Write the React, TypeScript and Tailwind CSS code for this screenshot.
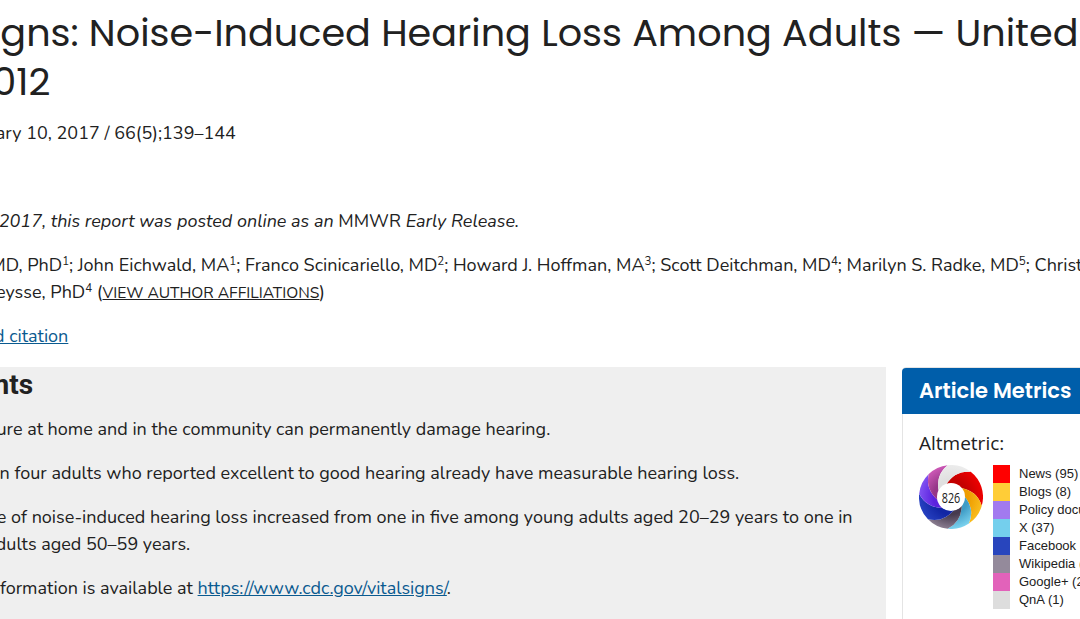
const LEGEND = [
  { color: 'bg-[#ff0000]', label: 'News (95)' },
  { color: 'bg-[#ffcd37]', label: 'Blogs (8)' },
  { color: 'bg-[#a27aef]', label: 'Policy documents (2)' },
  { color: 'bg-[#74cfed]', label: 'X (37)' },
  { color: 'bg-[#2845bd]', label: 'Facebook (5)' },
  { color: 'bg-[#948a9b]', label: 'Wikipedia (6)' },
  { color: 'bg-[#e262ba]', label: 'Google+ (2)' },
  { color: 'bg-[#dddddd]', label: 'QnA (1)' },
];

// swirl petals of the altmetric badge, clockwise from the red one
const PETALS = [
  { start: -52, sweep: 68, edge: '#ee0000', body: '#c40000' },
  { start: 16, sweep: 40, edge: '#f9bd1e', body: '#ee9c00' },
  { start: 56, sweep: 40, edge: '#7cd3ef', body: '#3f9cc6' },
  { start: 96, sweep: 40, edge: '#8a7d90', body: '#463a4e' },
  { start: 136, sweep: 50, edge: '#2640c0', body: '#1226a4' },
  { start: 186, sweep: 40, edge: '#8052f2', body: '#5c22de' },
  { start: 226, sweep: 38, edge: '#cc58b6', body: '#963688' },
  { start: 264, sweep: 44, edge: '#ececec', body: '#e0e0e0' },
];

function point(radius: number, deg: number) {
  const a = (deg * Math.PI) / 180;
  return `${(32 + radius * Math.cos(a)).toFixed(2)} ${(32 + radius * Math.sin(a)).toFixed(2)}`;
}

function petalPath(start: number, sweep: number) {
  const end = start + sweep;
  return `M${point(13, start - 62)} Q${point(27, start - 30)} ${point(32, start)} A32 32 0 0 1 ${point(32, end)} Q${point(27, end - 30)} ${point(13, end - 62)} Z`;
}

function AltmetricBadge() {
  return (
    <svg width="64" height="64" viewBox="0 0 64 64" className="shrink-0">
      <defs>
        {PETALS.map((p, i) => (
          <radialGradient key={p.start} id={`petal${i}`} gradientUnits="userSpaceOnUse" cx="32" cy="32" r="32">
            <stop offset="0.55" stopColor={p.body} />
            <stop offset="1" stopColor={p.edge} />
          </radialGradient>
        ))}
      </defs>
      {PETALS.map((p, i) => (
        <path key={p.start} d={petalPath(p.start, p.sweep)} fill={`url(#petal${i})`} />
      ))}
      <circle cx="32" cy="32" r="14" fill="#ffffff" />
    </svg>
  );
}

export default function App() {
  return (
    <div className="w-[1080px] h-[619px] overflow-hidden bg-white text-[#212121] font-['Nunito','Open_Sans','Liberation_Sans',sans-serif]">
      <div className="-ml-[126px] w-[1500px]">
        <h1 className="pt-[8px] text-[38.2px] leading-[49px] font-['Poppins','Inter',sans-serif] font-normal whitespace-nowrap">
          Vital Signs: Noise-Induced Hearing Loss Among Adults — United States
          <br />
          2011–2012
        </h1>

        <p className="mt-[14px] text-[18px] leading-[27px] whitespace-nowrap">Weekly / February 10, 2017 / 66(5);139–144</p>

        <p className="mt-[61px] text-[18px] leading-[27px] whitespace-nowrap">
          <em>On February 7, 2017, this report was posted online as an</em> MMWR <em>Early Release.</em>
        </p>

        <div className="mt-[17px] text-[18px] leading-[27px] whitespace-nowrap">
          <p className="-ml-[4px] h-[27px]">
            Yulia I. Carroll, MD, PhD<sup className="text-[11.5px]">1</sup>; John Eichwald, MA<sup className="text-[11.5px]">1</sup>; Franco Scinicariello, MD<sup className="text-[11.5px]">2</sup>; Howard J. Hoffman, MA<sup className="text-[11.5px]">3</sup>; Scott Deitchman, MD<sup className="text-[11.5px]">4</sup>; Marilyn S. Radke, MD<sup className="text-[11.5px]">5</sup>; Christa L. Themann,
          </p>
          <p className="h-[27px]">
            MA<sup className="text-[11.5px]">1</sup>; Patrick Breysse, PhD<sup className="text-[11.5px]">4</sup> (<span className="text-[15.6px] underline">VIEW AUTHOR AFFILIATIONS</span>)
          </p>
        </div>

        <p className="mt-[17px] text-[18px] leading-[27px] text-[#0a5a8f] underline whitespace-nowrap">View suggested citation</p>

        <div className="mt-[17px] flex items-start gap-[16px]">
          <section className="w-[1012px] h-[300px] bg-[#efefef] pl-[15px] pt-px">
            <h2 className="pl-[10px] text-[28px] leading-[34px] font-bold font-['Roboto',sans-serif] whitespace-nowrap">Key Points</h2>
            <ul className="mt-[14px] text-[18px] leading-[27px] space-y-[17px]">
              <li className="ml-[9px]">Noise exposure at home and in the community can permanently damage hearing.</li>
              <li className="-ml-[15px]">More than one in four adults who reported excellent to good hearing already have measurable hearing loss.</li>
              <li className="-ml-[6px]">
                The prevalence of noise-induced hearing loss increased from one in five among young adults aged 20–29 years to one in
                <span className="ml-[6px] block">four among adults aged 50–59 years.</span>
              </li>
              <li className="ml-[8px]">
                Additional information is available at <a className="text-[#0a5a8f] underline">https://www.cdc.gov/vitalsigns/</a>.
              </li>
            </ul>
          </section>

          <aside className="w-[300px] h-[300px] rounded-t-[4px] border border-[#e4e4e4] bg-white">
            <h3 className="h-[46px] -mx-px rounded-t-[4px] bg-[#005eaa] pl-[17px] text-[21px] leading-[46px] font-semibold text-white font-['Poppins','Inter',sans-serif] whitespace-nowrap">
              Article Metrics
            </h3>
            <div className="pl-[16px] pt-[15px]">
              <p className="text-[19px] leading-[28px] font-['Open_Sans',sans-serif]">Altmetric:</p>
              <div className="mt-[8px] flex items-start gap-[10px]">
                <div className="relative h-[64px] w-[64px]">
                  <AltmetricBadge />
                  <span className="absolute inset-0 flex items-center justify-center scale-x-[0.72] text-[15px] font-medium font-['Open_Sans',sans-serif]">826</span>
                </div>
                <ul className="font-['Liberation_Sans',sans-serif] text-[13px] leading-[18px]">
                  {LEGEND.map((row) => (
                    <li key={row.label} className="flex h-[18px] items-center gap-[9px] whitespace-nowrap">
                      <span className={`h-[18px] w-[17px] ${row.color}`} />
                      {row.label}
                    </li>
                  ))}
                </ul>
              </div>
            </div>
          </aside>
        </div>
      </div>
    </div>
  );
}
